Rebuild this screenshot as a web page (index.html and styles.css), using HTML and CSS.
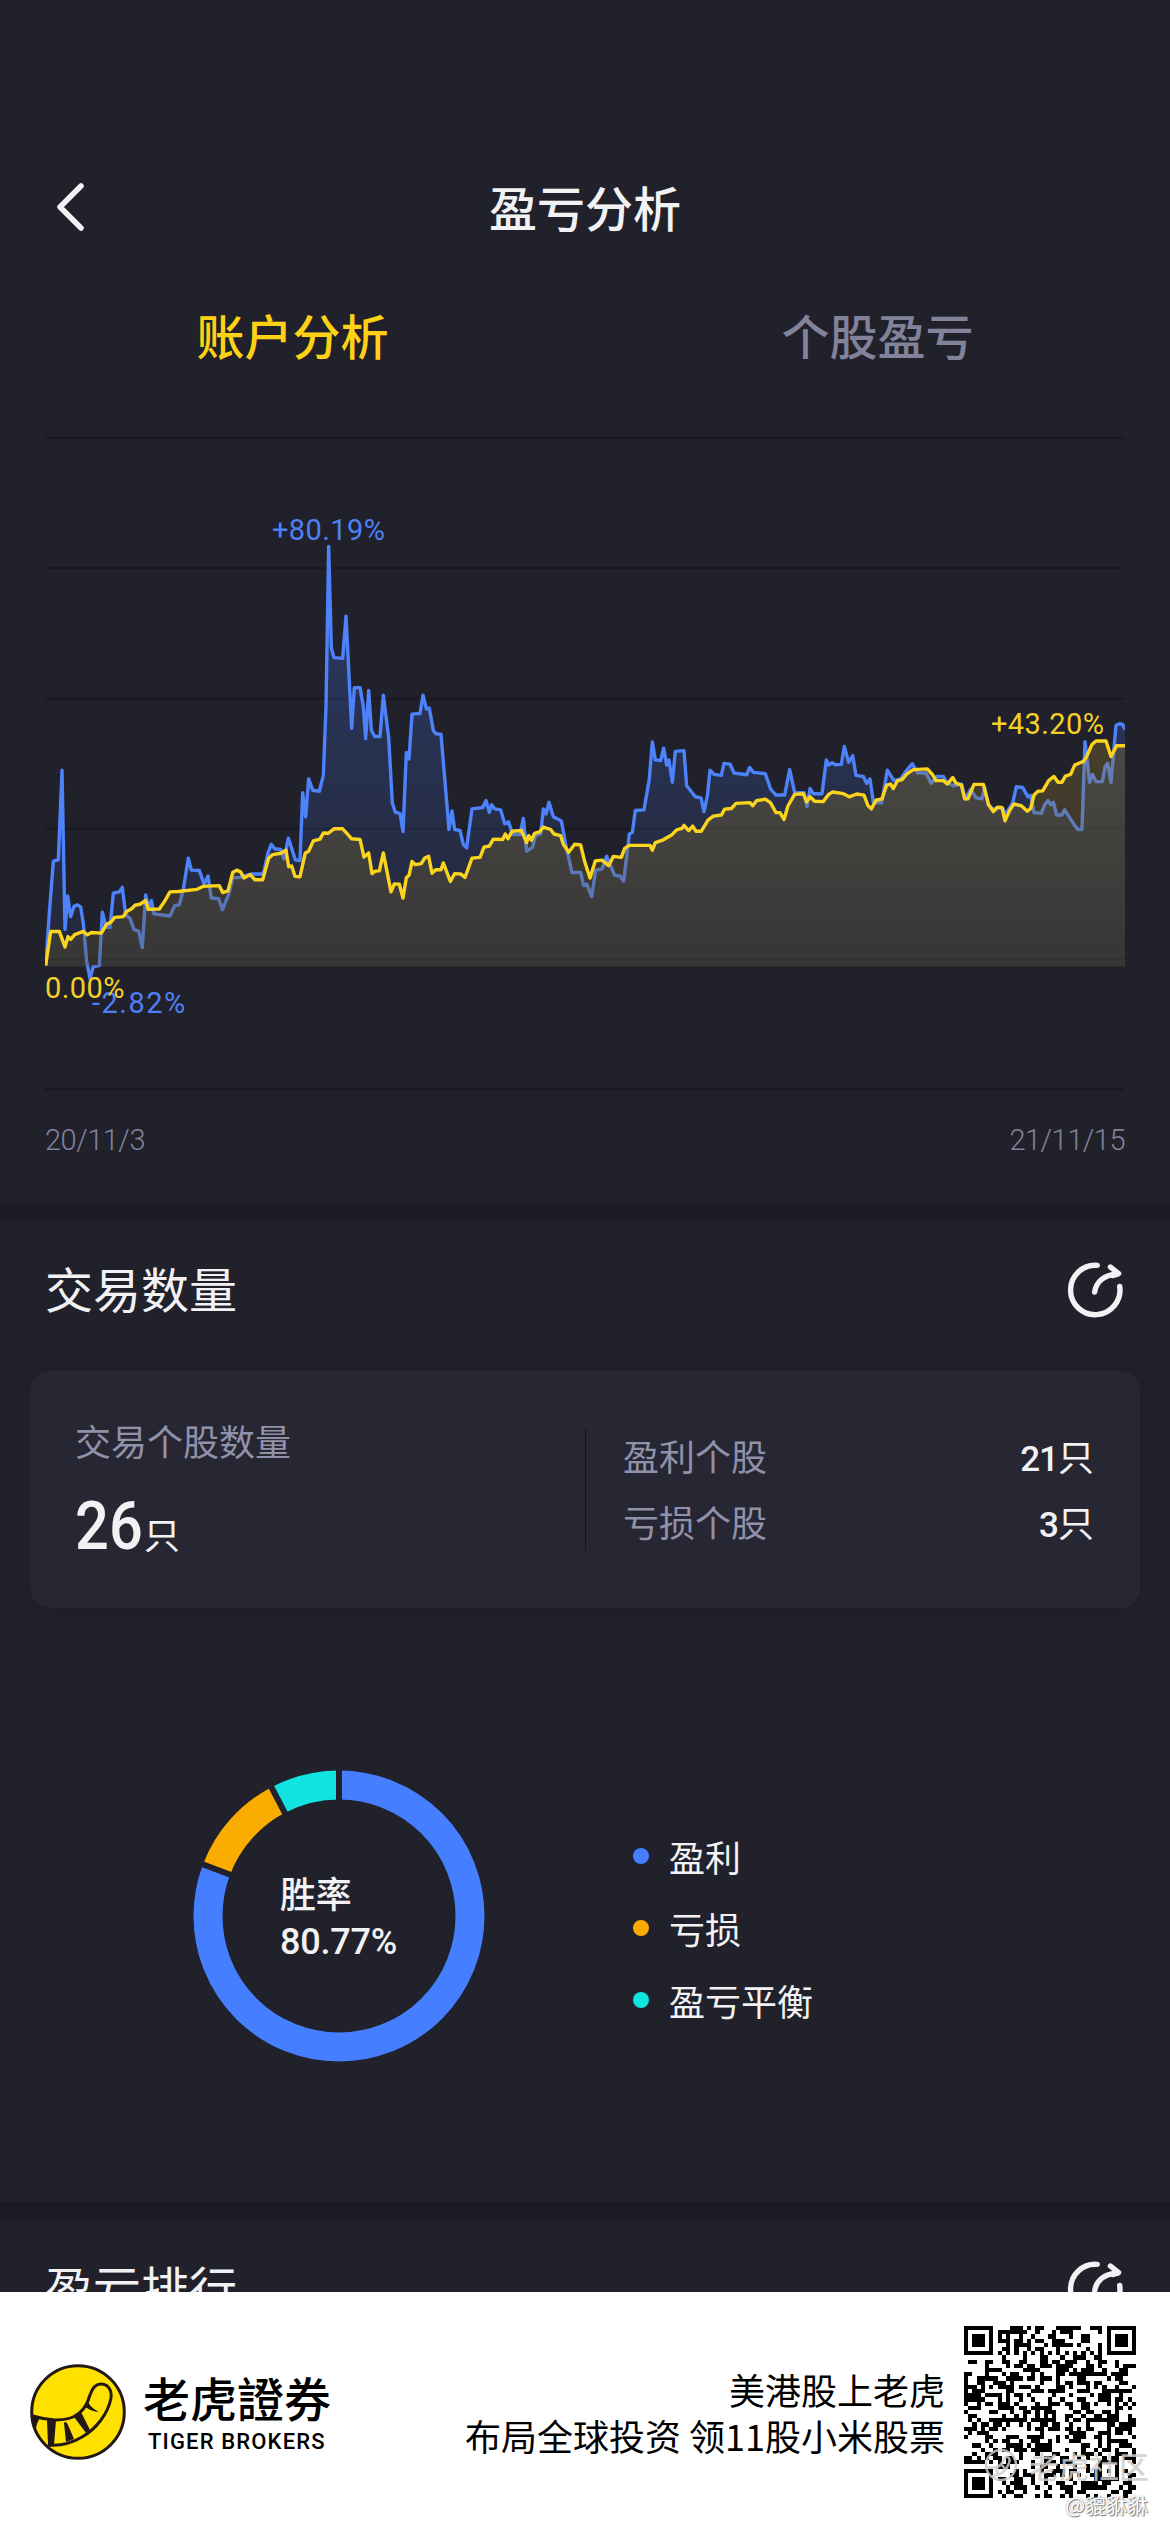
FILE: index.html
```html
<!DOCTYPE html>
<html lang="zh-CN">
<head>
  <meta charset="UTF-8">
  <meta name="viewport" content="width=device-width, initial-scale=1.0"/>
  <title>盈亏分析</title>
  <link rel="stylesheet" href="styles.css">
</head>
<body>
  <!-- Shared icon -->
  <svg width="0" height="0" class="defs">
    <symbol id="icon-share" viewBox="0 0 56 56">
      <path d="M30.3 3.4A24.7 24.7 0 1 0 52.7 24.5"/>
      <path d="M27.7 30C29 20 37 12.6 50 12.2"/>
      <path d="M43.4 5L51.6 11.6L46 13.4"/>
    </symbol>
  </svg>

  <div class="screen">
    <header class="nav-bar">
      <svg class="back" width="34" height="52" viewBox="0 0 34 52"><path d="M28 5L7 26L28 47"/></svg>
      <h1>盈亏分析</h1>
    </header>

    <nav class="tabs">
      <a class="tab active">账户分析</a>
      <a class="tab">个股盈亏</a>
    </nav>

    <!-- Profit chart -->
    <section class="chart-section">
      <div class="chart">
        <svg id="chart" width="1080" height="664" viewBox="45 -203 3240 1928" preserveAspectRatio="none">
          <defs>
            <linearGradient id="blueFill" gradientUnits="userSpaceOnUse" x1="0" y1="135" x2="0" y2="1355">
              <stop offset="0" stop-color="#457eff" stop-opacity="0.28"/>
              <stop offset="1" stop-color="#457eff" stop-opacity="0.06"/>
            </linearGradient>
            <linearGradient id="yellowFill" gradientUnits="userSpaceOnUse" x1="0" y1="700" x2="0" y2="1355">
              <stop offset="0" stop-color="#94792a" stop-opacity="0.33"/>
              <stop offset="1" stop-color="#5f5632" stop-opacity="0.33"/>
            </linearGradient>
          </defs>
          <path class="grid" d="M45 -180H3285M45 198H3285M45 577H3285M45 955H3285M45 1334H3285M45 1711H3285"/>
          <path id="blue-area" fill="url(#blueFill)"/>
          <path id="blue-line" class="line blue"/>
          <path id="yellow-area" fill="url(#yellowFill)"/>
          <path id="yellow-line" class="line yellow"/>
        </svg>
        <span class="mark mark-high">+80.19%</span>
        <span class="mark mark-low">-2.82%</span>
        <span class="mark mark-start">0.00%</span>
        <span class="mark mark-end">+43.20%</span>
      </div>
      <div class="dates"><span>20/11/3</span><span>21/11/15</span></div>
    </section>

    <!-- Trade count -->
    <section class="block trades">
      <div class="block-head">
        <h2>交易数量</h2>
        <svg class="share" width="56" height="56"><use href="#icon-share"/></svg>
      </div>
      <div class="card">
        <div class="total">
          <div class="label">交易个股数量</div>
          <div class="total-value"><b>26</b><span>只</span></div>
        </div>
        <div class="detail">
          <div class="row"><span class="label">盈利个股</span><span class="value">21<i>只</i></span></div>
          <div class="row"><span class="label">亏损个股</span><span class="value">3<i>只</i></span></div>
        </div>
      </div>
      <div class="rate">
        <div class="donut">
          <svg width="292" height="292" viewBox="-146 -146 292 292">
            <g fill="none" stroke-width="29" transform="rotate(-90)">
              <circle r="131" stroke="#457eff" pathLength="26" stroke-dasharray="21 5"/>
              <circle r="131" stroke="#faad00" pathLength="26" stroke-dasharray="3 23" stroke-dashoffset="-21"/>
              <circle r="131" stroke="#10e3e0" pathLength="26" stroke-dasharray="2 24" stroke-dashoffset="-24"/>
            </g>
            <g class="gaps">
              <path d="M0 -112V-148"/>
              <path d="M0 -112V-148" transform="rotate(-69.2)"/>
              <path d="M0 -112V-148" transform="rotate(-27.7)"/>
            </g>
          </svg>
          <div class="donut-text"><span>胜率</span><span>80.77%</span></div>
        </div>
        <ul class="legend">
          <li class="win">盈利</li>
          <li class="lose">亏损</li>
          <li class="even">盈亏平衡</li>
        </ul>
      </div>
    </section>

    <!-- Ranking -->
    <section class="block ranking">
      <div class="block-head">
        <h2>盈亏排行</h2>
        <svg class="share" width="56" height="56"><use href="#icon-share"/></svg>
      </div>
    </section>

    <!-- Share footer -->
    <footer class="footer">
      <svg class="logo" width="96" height="96" viewBox="0 0 96 96">
        <circle cx="48" cy="48" r="46.3" fill="#ffe100" stroke="#231815" stroke-width="3"/>
        <path d="M3 52C18 57 34 57 43 53C52 49 57 42 60 31C63 22 67 20 71 20C78 20 82 26 81 34C78 50 66 65 52 73C42 79 30 82 18 81" fill="none" stroke="#231815" stroke-width="3"/>
        <path d="M2 50L10 54Q6 60 6 66L3 59ZM17 56H26L24 81H18ZM34 59Q36 56 38 61L44 75L36 78ZM44 53L51 48L60 66L56 69ZM53 43L58 38Q61 44 69 48Q61 47 57 44Z" fill="#231815"/>
      </svg>
      <div class="brand">
        <div class="brand-cn">老虎證券</div>
        <div class="brand-en">TIGER BROKERS</div>
      </div>
      <div class="slogan">美港股上老虎<br>布局全球投资 领11股小米股票</div>
      <svg id="qr" width="172" height="172" viewBox="0 0 41 41" shape-rendering="crispEdges"><path/></svg>
      <div class="watermark">
        <svg width="34" height="34" viewBox="0 0 34 34"><circle cx="17" cy="17" r="15"/><path d="M3 19C14 22 18 17 20 11C22 7 27 9 25 15C23 22 16 28 8 28M12 20L14 27M18 17L22 22"/></svg>
        <span>老虎社区</span>
      </div>
      <div class="author">@貔貅貅</div>
    </footer>
  </div>

  <script>
    const blue = '47,1352 58,1200 70,1050 76,1047 85,1045 96,785 105,1247 113,1150 122,1210 132,1180 142,1176 152,1182 160,1230 170,1340 180,1390 190,1355 208,1352 217,1197 228,1240 240,1242 250,1142 268,1138 277,1125 287,1205 300,1215 312,1248 326,1252 337,1300 347,1147 356,1185 364,1163 372,1202 420,1208 434,1178 448,1176 460,1130 475,1040 484,1075 508,1076 522,1115 534,1092 544,1156 566,1158 577,1190 598,1140 608,1097 630,1096 665,1086 700,1086 714,1025 724,1000 734,1013 752,1015 762,1043 775,982 796,1045 810,1047 818,850 827,920 836,810 848,843 868,846 880,800 888,600 896,135 904,430 912,458 938,460 948,338 965,663 973,545 990,545 1000,600 1007,693 1016,553 1024,668 1034,687 1050,687 1060,567 1076,690 1087,880 1096,907 1110,910 1119,963 1129,733 1137,752 1146,622 1170,620 1179,567 1189,607 1198,605 1210,670 1218,679 1233,680 1257,957 1266,903 1274,957 1290,960 1300,1000 1310,1010 1326,897 1358,893 1368,873 1378,907 1385,885 1394,897 1412,900 1424,940 1436,935 1448,972 1470,972 1480,925 1490,1020 1508,1008 1516,975 1532,970 1540,897 1548,912 1557,878 1570,920 1594,932 1607,1000 1626,1082 1652,1082 1661,1120 1670,1115 1685,1152 1697,1075 1716,1072 1730,1035 1754,1090 1770,1092 1781,1107 1798,970 1807,965 1816,902 1842,900 1858,810 1867,703 1876,755 1892,757 1901,721 1910,770 1917,755 1927,820 1936,730 1962,728 1970,830 1996,862 2013,865 2022,905 2032,860 2040,785 2053,797 2074,800 2082,765 2100,767 2112,793 2150,798 2159,777 2170,791 2206,795 2222,840 2238,857 2264,857 2279,783 2294,850 2322,850 2331,890 2340,838 2350,853 2376,853 2389,755 2396,770 2406,763 2416,769 2434,768 2443,716 2456,762 2468,743 2478,800 2500,803 2510,823 2520,810 2530,878 2555,880 2572,785 2592,815 2612,810 2630,785 2647,766 2662,792 2688,793 2704,823 2720,803 2740,803 2750,820 2770,830 2795,825 2806,868 2822,840 2838,865 2856,868 2864,835 2874,885 2890,898 2918,895 2926,915 2948,880 2959,833 2978,835 2994,862 3002,858 3012,908 3034,910 3044,885 3054,873 3062,885 3070,878 3080,915 3096,915 3104,900 3134,945 3144,957 3156,957 3165,702 3179,820 3188,797 3198,818 3217,818 3225,775 3233,765 3243,820 3258,655 3268,650 3278,652 3285,667';
    const yellow = '47,1352 62,1253 88,1253 105,1298 114,1268 122,1276 134,1262 160,1253 172,1263 184,1256 214,1258 230,1232 244,1225 254,1212 280,1210 290,1195 305,1187 315,1177 330,1174 347,1163 355,1189 388,1188 404,1165 420,1138 445,1137 500,1131 520,1122 568,1120 578,1140 594,1135 608,1082 620,1075 632,1080 642,1098 660,1088 675,1103 698,1103 716,1040 728,1030 752,1026 768,1017 776,1065 785,1063 795,1093 810,1094 826,1025 836,1020 850,990 870,985 880,967 895,968 912,955 938,955 952,970 965,984 990,986 1002,1037 1016,1025 1026,1085 1036,1078 1048,1077 1060,1025 1083,1138 1093,1115 1108,1116 1119,1156 1129,1097 1137,1090 1146,1050 1156,1059 1174,1056 1184,1040 1196,1035 1206,1084 1217,1074 1233,1074 1240,1054 1261,1108 1274,1085 1292,1086 1305,1096 1326,1040 1350,1038 1362,1008 1378,1005 1390,985 1418,986 1426,970 1434,984 1446,962 1474,960 1490,995 1496,975 1504,988 1514,968 1530,963 1540,950 1562,957 1572,970 1592,975 1600,1000 1616,1023 1634,1000 1652,1002 1664,1050 1680,1098 1696,1048 1716,1046 1736,1062 1750,1035 1774,1038 1784,1012 1798,1003 1860,1003 1867,1017 1876,995 1900,987 1926,972 1940,958 1956,954 1962,945 1976,960 1988,947 1998,962 2014,962 2034,930 2050,918 2074,915 2084,898 2104,896 2118,881 2160,879 2168,888 2180,873 2206,869 2222,880 2238,908 2250,908 2262,928 2274,888 2294,855 2320,853 2330,877 2340,862 2354,875 2380,876 2396,855 2408,848 2440,853 2458,862 2480,854 2502,857 2514,888 2524,897 2538,872 2556,868 2570,828 2582,825 2590,838 2602,816 2616,812 2630,796 2650,783 2692,781 2708,798 2718,815 2740,815 2752,825 2768,806 2778,822 2794,828 2804,868 2814,868 2832,826 2860,826 2876,885 2890,905 2902,892 2916,893 2925,932 2940,900 2952,883 2974,888 2992,904 3002,896 3012,857 3024,846 3038,845 3056,815 3072,803 3084,820 3096,820 3106,802 3122,797 3134,770 3150,763 3160,760 3170,745 3186,710 3198,700 3228,700 3243,745 3260,714 3285,714';

    const drawSeries = (name, points) => {
      document.getElementById(name + '-line').setAttribute('d', 'M' + points);
      document.getElementById(name + '-area').setAttribute('d', `M${points} L3285,1355 L47,1355 Z`);
    };
    drawSeries('blue', blue);
    drawSeries('yellow', yellow);

    // QR modules: finders, timing, alignment, then data cells
    const N = 41;
    let seed = 20211115;
    const rand = () => (seed = (seed * 1103515245 + 12345) % 2147483648) / 2147483648;
    const ring = (x, y, cx, cy) => Math.max(Math.abs(x - cx), Math.abs(y - cy));
    const isDark = (x, y) => {
      const bit = rand() < 0.5;
      for (const [cx, cy] of [[3, 3], [37, 3], [3, 37]]) {
        const r = ring(x, y, cx, cy);
        if (r <= 4) return r < 2 || r === 3;
      }
      const a = ring(x, y, 34, 34);
      if (a <= 2) return a !== 1;
      if (x === 6 || y === 6) return (x + y) % 2 === 0;
      return bit;
    };
    let d = '';
    for (let y = 0; y < N; y++)
      for (let x = 0; x < N; x++)
        if (isDark(x, y)) d += `M${x} ${y}h1v1h-1z`;
    document.querySelector('#qr path').setAttribute('d', d);
  </script>
</body>
</html>
```
FILE: styles.css
```css
/* --- Vars and reset --- */
:root {
  --bg: #21212b;
  --bg-deep: #1b1b24;
  --card: #272733;
  --text: #f2f2f5;
  --muted: #82829b;
  --label: #9191a9;
  --blue: #457eff;
  --yellow: #fed115;
  --font: Roboto, "Noto Sans CJK SC", sans-serif;
  --cjk: "Noto Sans CJK SC", sans-serif;
}
* { box-sizing: border-box; margin: 0; padding: 0; }
body { width: 1170px; font-family: var(--font); background: var(--bg); color: var(--text); }
.defs { position: absolute; }
.screen { height: 2532px; display: flex; flex-direction: column; overflow: hidden; }

/* --- Nav bar and tabs --- */
.nav-bar {
  height: 270px;
  padding: 144px 53px 0;
  display: grid;
  grid-template-columns: 34px 1fr 34px;
  align-items: center;
  flex: none;
}
.nav-bar h1 { padding-bottom: 3px; font: 500 48px/64px var(--cjk); text-align: center; }
.back path { fill: none; stroke: var(--text); stroke-width: 5.5; stroke-linecap: round; stroke-linejoin: round; }
.tabs { display: flex; height: 160px; flex: none; }
.tab { flex: 1; text-align: center; font: 500 48px/128px var(--cjk); color: var(--muted); }
.tab.active { color: var(--yellow); }

/* --- Chart --- */
.chart-section { height: 773px; padding: 0 45px; flex: none; }
.chart { position: relative; height: 664px; }
.chart svg { display: block; }
.grid { fill: none; stroke: #191922; stroke-width: 2; vector-effect: non-scaling-stroke; }
.line { fill: none; stroke-width: 3.4; stroke-linejoin: round; vector-effect: non-scaling-stroke; }
.line.blue { stroke: #4d82fb; }
.line.yellow { stroke: #fbd41d; }
.mark { position: absolute; font-size: 29px; line-height: 34px; letter-spacing: 0.4px; color: #4d80f5; }
.mark-high { left: 227px; top: 83px; }
.mark-low { left: 47px; top: 556px; letter-spacing: 1.5px; }
.mark-start { left: 0; top: 541px; color: #f5d02a; }
.mark-end { left: 946px; top: 277px; color: #f5d02a; }
.dates {
  display: flex;
  justify-content: space-between;
  padding-top: 29px;
  font-size: 29px;
  font-weight: 300;
  line-height: 34px;
  letter-spacing: -0.5px;
  color: var(--muted);
}

/* --- Blocks --- */
.block { border-top: 18px solid var(--bg-deep); flex: none; }
.trades { height: 999px; }
.ranking { height: 90px; overflow: hidden; }
.block-head { display: flex; justify-content: space-between; align-items: center; height: 138px; padding: 0 47px 0 45px; }
.block-head h2 { padding-bottom: 6px; font: 400 48px/64px var(--cjk); }
.share { fill: none; stroke: var(--text); stroke-width: 5.4; stroke-linecap: round; stroke-linejoin: round; }

.card {
  display: flex;
  align-items: center;
  height: 237px;
  margin: 12px 30px 0 30px;
  border-radius: 20px;
  background: var(--card);
  box-shadow: 0 6px 20px rgba(0, 0, 0, 0.08);
}
.label { font: 400 36px/48px var(--cjk); color: var(--label); }
.total { flex: 1; height: 237px; padding: 45px 0 0 45px; }
.total-value { display: flex; align-items: baseline; height: 80px; margin-top: 27px; }
.total-value b { width: 69px; font-size: 67px; line-height: 70px; font-weight: 500; transform: scaleX(0.89); transform-origin: left; }
.total-value span { font: 400 36px/48px var(--cjk); }
.detail { width: 555px; height: 122px; padding: 2px 46px 0 37px; border-left: 1px solid #15151d; }
.row { display: flex; justify-content: space-between; height: 66px; }
.value { font-size: 35px; line-height: 48px; font-weight: 500; letter-spacing: -1px; }
.value i { font: 400 36px/48px var(--cjk); letter-spacing: 0; }

/* --- Win rate --- */
.rate { display: flex; padding: 162px 0 0 193px; }
.donut { position: relative; width: 292px; height: 292px; }
.gaps { stroke: var(--bg); stroke-width: 6; }
.donut-text {
  position: absolute;
  left: 87px;
  top: 103px;
  display: flex;
  flex-direction: column;
  font-size: 36px;
  font-weight: 500;
  line-height: 46px;
  letter-spacing: -0.2px;
}
.legend { list-style: none; margin: 50px 0 0 148px; }
.legend li { display: flex; align-items: center; gap: 20px; height: 72px; font: 400 36px/48px var(--cjk); }
.legend li::before { content: ""; width: 16px; height: 16px; border-radius: 50%; background: var(--blue); }
.legend .lose::before { background: #faad00; }
.legend .even::before { background: #10e3e0; }

/* --- Footer --- */
.footer {
  position: relative;
  display: flex;
  align-items: flex-start;
  height: 240px;
  padding: 34px 34px 0 30px;
  background: #fff;
  color: #000;
  flex: none;
}
.logo { margin-top: 38px; }
.brand { margin: 40px 0 0 17px; }
.brand-cn { font: 500 47px/62px "Noto Sans CJK TC", sans-serif; }
.brand-en { margin: 1px 0 0 5px; font-size: 22px; line-height: 26px; font-weight: 500; letter-spacing: 1.15px; }
.slogan { flex: 1; margin: 40px 19px 0 0; text-align: right; white-space: nowrap; font: 400 36px/46px var(--cjk); }
.watermark {
  position: absolute;
  left: 984px;
  top: 153px;
  display: flex;
  align-items: center;
  gap: 11px;
  font: 500 30px/40px var(--cjk);
  color: rgba(205, 205, 205, 0.85);
}
.watermark svg { fill: none; stroke: rgba(205, 205, 205, 0.85); stroke-width: 2.5; }
.author {
  position: absolute;
  right: 22px;
  top: 198px;
  font: 400 21px/28px var(--cjk);
  color: #fff;
  text-shadow: 1px 1px 1px #777, 0 0 2px #999;
}
```
